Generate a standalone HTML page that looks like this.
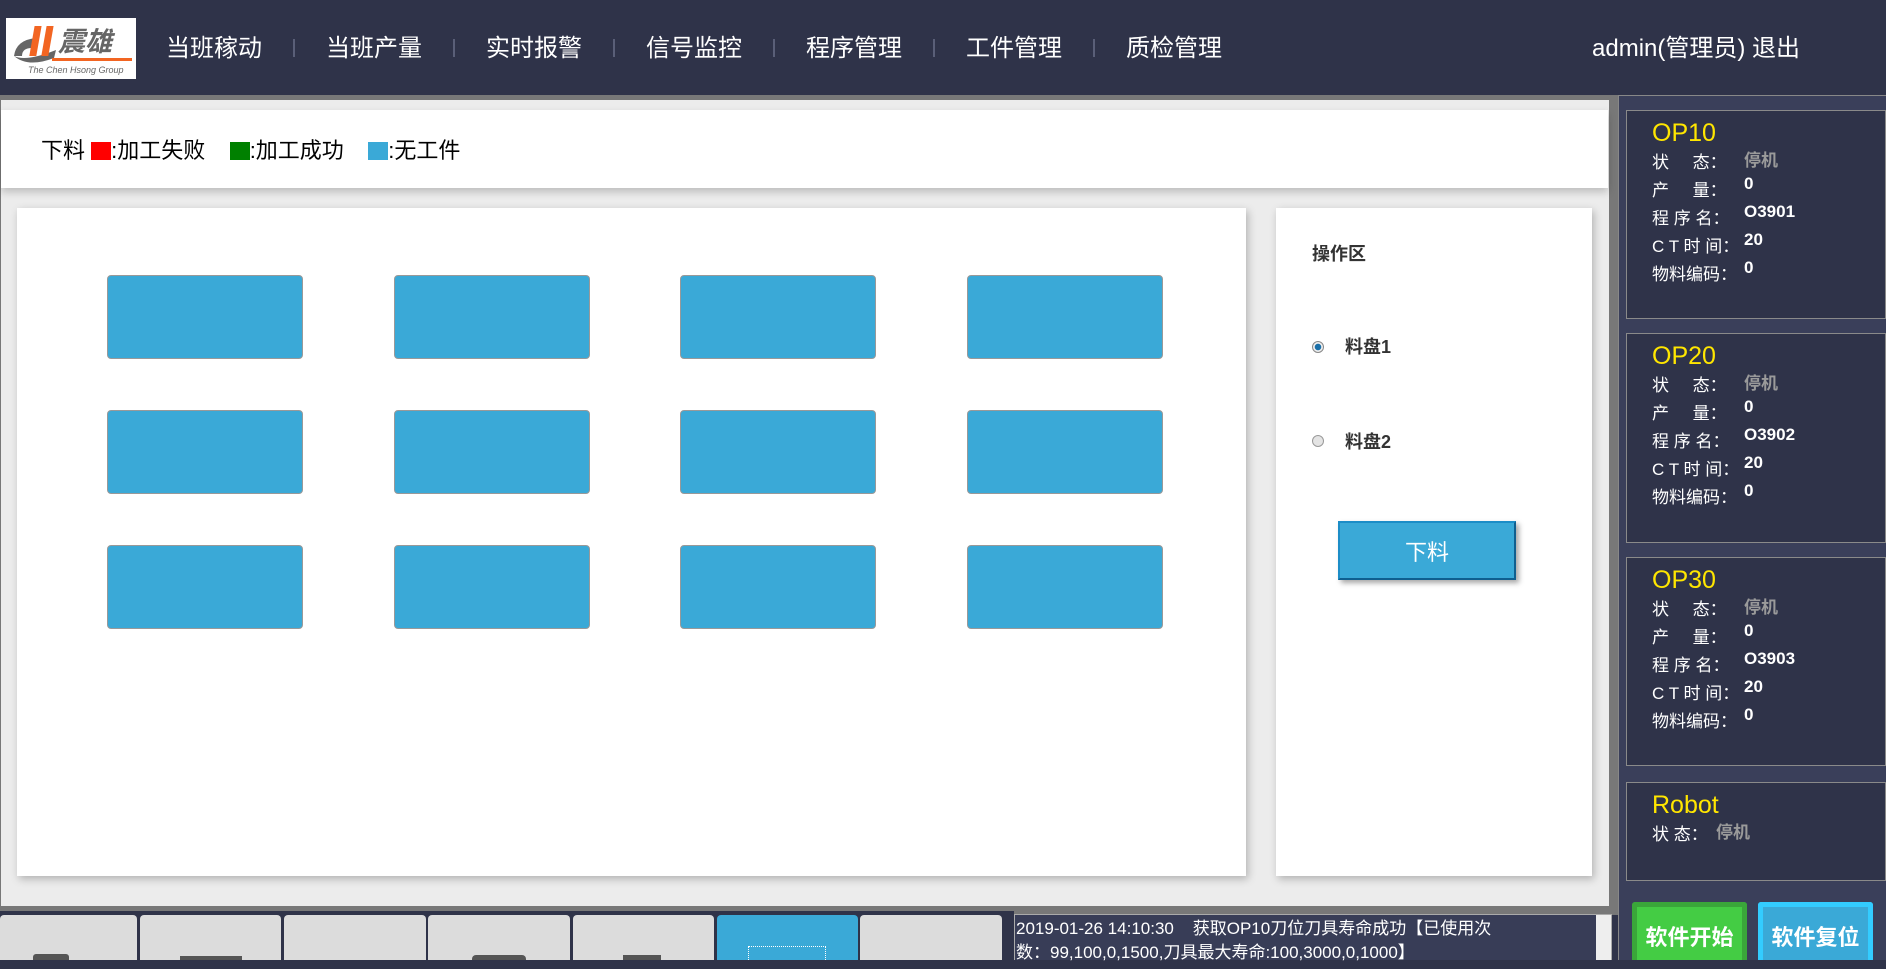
<!DOCTYPE html>
<html><head><meta charset="utf-8"><style>
*{margin:0;padding:0;box-sizing:border-box}
body{width:1886px;height:960px;overflow:hidden;background:#2f3349;font-family:"Liberation Sans","Noto Sans CJK SC",sans-serif;position:relative}
.a{position:absolute}
.nav{position:absolute;top:35px;color:#fff;font-size:24px;line-height:28px;white-space:nowrap}
.sep{position:absolute;top:39px;width:2px;height:18px;background:#5a5f78}
.box{position:absolute;width:196px;height:84px;background:#3aa9d7;border:1px solid #999;border-radius:4px}
.op{position:absolute;left:1626px;width:260px;border:1px solid #8a8a8a;background:#2f3349}
.op .t{position:absolute;left:25px;top:8px;color:#ffe600;font-size:25px}
.row{position:absolute;left:25px;color:#fff;font-size:17px;white-space:nowrap}
.row b{position:absolute;left:92px;top:-2px;font-size:17px}
.g{color:#9a9a9a}
.tab{position:absolute;top:915px;height:45px;background:#dcdcdc;border-radius:4px 4px 0 0}
</style></head><body>
<!-- header -->
<div class="a" style="left:6px;top:18px;width:130px;height:61px;background:#fff">
 <svg width="130" height="61" viewBox="0 0 130 61">
  <path d="M8 38 Q10 22 30 20 L26 30 Q16 30 16 38 Z" fill="#666"/>
  <path d="M8 38 Q20 44 50 32 L48 40 Q22 50 8 38Z" fill="#666"/>
  <rect x="30" y="8" width="7" height="30" fill="#f26522" transform="skewX(-10)"/>
  <rect x="42" y="8" width="7" height="30" fill="#f26522" transform="skewX(-10)"/>
  <text x="52" y="33" font-size="27" font-weight="bold" font-style="italic" fill="#666" font-family="Noto Sans CJK SC,sans-serif">震雄</text>
  <rect x="46" y="40" width="80" height="3" fill="#f26522"/>
  <text x="22" y="55" font-size="9" font-style="italic" fill="#666">The Chen Hsong Group</text>
 </svg>
</div>
<div class="nav" style="left:166px">当班稼动</div><div class="sep" style="left:293px"></div>
<div class="nav" style="left:326px">当班产量</div><div class="sep" style="left:453px"></div>
<div class="nav" style="left:486px">实时报警</div><div class="sep" style="left:613px"></div>
<div class="nav" style="left:646px">信号监控</div><div class="sep" style="left:773px"></div>
<div class="nav" style="left:806px">程序管理</div><div class="sep" style="left:933px"></div>
<div class="nav" style="left:966px">工件管理</div><div class="sep" style="left:1093px"></div>
<div class="nav" style="left:1126px">质检管理</div>
<div class="nav" style="left:1592px">admin(管理员) 退出</div>

<!-- main left area -->
<div class="a" style="left:0;top:95px;width:1618px;height:820px;background:#787878"></div>
<div class="a" style="left:1px;top:100px;width:1608px;height:806px;background:#ececec"></div>
<div class="a" style="left:1px;top:110px;width:1607px;height:78px;background:#fff;box-shadow:0 4px 8px rgba(0,0,0,.2)"></div>
<div class="a" style="left:41px;top:138px;font-size:22px;color:#000;white-space:nowrap;line-height:26px">下料 <span style="display:inline-block;width:20px;height:18px;background:#f00;vertical-align:-2px"></span>:加工失败&nbsp;&nbsp;&nbsp;&nbsp;<span style="display:inline-block;width:20px;height:18px;background:#008000;vertical-align:-2px"></span>:加工成功&nbsp;&nbsp;&nbsp;&nbsp;<span style="display:inline-block;width:20px;height:18px;background:#3aa9d7;vertical-align:-2px"></span>:无工件</div>

<div class="a" style="left:17px;top:208px;width:1229px;height:668px;background:#fff;box-shadow:2px 3px 8px rgba(0,0,0,.25)"></div>
<div class="box" style="left:107px;top:275px"></div><div class="box" style="left:394px;top:275px"></div><div class="box" style="left:680px;top:275px"></div><div class="box" style="left:967px;top:275px"></div>
<div class="box" style="left:107px;top:410px"></div><div class="box" style="left:394px;top:410px"></div><div class="box" style="left:680px;top:410px"></div><div class="box" style="left:967px;top:410px"></div>
<div class="box" style="left:107px;top:545px"></div><div class="box" style="left:394px;top:545px"></div><div class="box" style="left:680px;top:545px"></div><div class="box" style="left:967px;top:545px"></div>

<div class="a" style="left:1276px;top:208px;width:316px;height:668px;background:#fff;box-shadow:2px 3px 8px rgba(0,0,0,.25)"></div>
<div class="a" style="left:1312px;top:240px;font-size:18px;font-weight:bold;color:#333">操作区</div>
<div class="a" style="left:1312px;top:341px;width:12px;height:12px;border-radius:50%;border:1px solid #888;background:radial-gradient(circle,#1a6fa8 0 3px,#eee 3.5px)"></div>
<div class="a" style="left:1345px;top:333px;font-size:18px;font-weight:bold;color:#333">料盘1</div>
<div class="a" style="left:1312px;top:435px;width:12px;height:12px;border-radius:50%;border:1px solid #999;background:#e4e4e4"></div>
<div class="a" style="left:1345px;top:428px;font-size:18px;font-weight:bold;color:#333">料盘2</div>
<div class="a" style="left:1338px;top:521px;width:178px;height:59px;background:#3aa9d7;border:2px solid #1c8dc7;border-right-color:#0f5f8f;border-bottom-color:#0f5f8f;box-shadow:3px 3px 5px rgba(0,0,0,.35);color:#fff;font-size:22px;text-align:center;line-height:60px">下料</div>

<!-- bottom -->
<div class="a" style="left:0;top:911px;width:1014px;height:49px;background:#2f3349"></div>
<div class="tab" style="left:0;width:137px"></div>
<div class="tab" style="left:140px;width:141px"></div>
<div class="tab" style="left:284px;width:142px"></div>
<div class="tab" style="left:428px;width:142px"></div>
<div class="tab" style="left:573px;width:141px"></div>
<div class="tab" style="left:717px;width:141px;background:#3aa9d7"></div>
<div class="tab" style="left:860px;width:142px"></div>
<div class="a" style="left:33px;top:954px;width:36px;height:6px;background:#555;border-radius:3px 3px 0 0"></div>
<div class="a" style="left:180px;top:956px;width:62px;height:4px;background:#555"></div>
<div class="a" style="left:472px;top:955px;width:54px;height:5px;background:#555;border-radius:4px 4px 0 0"></div>
<div class="a" style="left:623px;top:955px;width:38px;height:5px;background:#555"></div>
<div class="a" style="left:748px;top:946px;width:78px;height:14px;border:1px dotted #fff;border-bottom:none"></div>
<div class="a" style="left:1014px;top:914px;width:598px;height:46px;background:#383d57;border:1px solid #aaa;border-bottom:none"></div>
<div class="a" style="left:1016px;top:917px;color:#fff;font-size:17px;line-height:24px;width:500px">2019-01-26 14:10:30&nbsp;&nbsp;&nbsp; 获取OP10刀位刀具寿命成功【已使用次数：99,100,0,1500,刀具最大寿命:100,3000,0,1000】</div>
<div class="a" style="left:1596px;top:915px;width:15px;height:45px;background:#eee"></div>

<!-- right panel -->
<div class="a" style="left:1618px;top:95px;width:268px;height:865px;background:#3a3f5a;border-left:1px solid #888;border-top:1px solid #888"></div>
<div class="op" style="top:110px;height:209px"><div class="t">OP10</div>
 <div class="row" style="top:37px">状&nbsp;&nbsp;&nbsp;&nbsp;&nbsp;态：<b class="g">停机</b></div>
 <div class="row" style="top:65px">产&nbsp;&nbsp;&nbsp;&nbsp;&nbsp;量：<b>0</b></div>
 <div class="row" style="top:93px">程 序 名：<b>O3901</b></div>
 <div class="row" style="top:121px">C T 时 间：<b>20</b></div>
 <div class="row" style="top:149px">物料编码：<b>0</b></div></div>
<div class="op" style="top:333px;height:210px"><div class="t">OP20</div>
 <div class="row" style="top:37px">状&nbsp;&nbsp;&nbsp;&nbsp;&nbsp;态：<b class="g">停机</b></div>
 <div class="row" style="top:65px">产&nbsp;&nbsp;&nbsp;&nbsp;&nbsp;量：<b>0</b></div>
 <div class="row" style="top:93px">程 序 名：<b>O3902</b></div>
 <div class="row" style="top:121px">C T 时 间：<b>20</b></div>
 <div class="row" style="top:149px">物料编码：<b>0</b></div></div>
<div class="op" style="top:557px;height:209px"><div class="t">OP30</div>
 <div class="row" style="top:37px">状&nbsp;&nbsp;&nbsp;&nbsp;&nbsp;态：<b class="g">停机</b></div>
 <div class="row" style="top:65px">产&nbsp;&nbsp;&nbsp;&nbsp;&nbsp;量：<b>0</b></div>
 <div class="row" style="top:93px">程 序 名：<b>O3903</b></div>
 <div class="row" style="top:121px">C T 时 间：<b>20</b></div>
 <div class="row" style="top:149px">物料编码：<b>0</b></div></div>
<div class="op" style="top:782px;height:99px"><div class="t">Robot</div>
 <div class="row" style="top:37px">状 态：<b class="g" style="left:64px">停机</b></div></div>
<div class="a" style="left:1632px;top:902px;width:115px;height:58px;background:#44cc44;border:5px solid #3aa63a;border-bottom:none;border-radius:3px 3px 0 0;color:#fff;font-weight:bold;font-size:22px;text-align:center;line-height:62px">软件开始</div>
<div class="a" style="left:1758px;top:902px;width:115px;height:58px;background:#3aa9d7;border:5px solid #33ccff;border-bottom:none;border-radius:3px 3px 0 0;color:#fff;font-weight:bold;font-size:22px;text-align:center;line-height:62px">软件复位</div>
</body></html>
